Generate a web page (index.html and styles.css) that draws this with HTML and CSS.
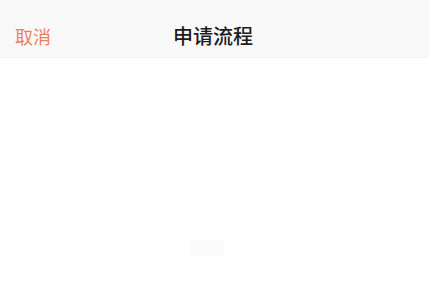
FILE: index.html
```html
<!DOCTYPE html>
<html lang="zh">
<head>
<meta charset="utf-8">
<title>申请流程</title>
<link rel="stylesheet" href="styles.css">
</head>
<body>
<div class="page">
  <header class="navbar">
    <span class="nav-left">取消</span>
    <span class="nav-title">申请流程</span>
    <span class="nav-right"></span>
  </header>
  <main class="content">
    <div class="placeholder"></div>
  </main>
</div>
</body>
</html>
```
FILE: styles.css
```css
html, body {
  margin: 0;
  padding: 0;
  background: #ffffff;
}
.page {
  width: 433px;
  height: 288px;
  display: flex;
  flex-direction: column;
  font-family: "Noto Sans CJK SC", "Noto Sans", sans-serif;
  overflow: hidden;
}
.navbar {
  height: 58px;
  flex: none;
  background: #f8f8f8;
  display: grid;
  grid-template-columns: 1fr auto 1fr;
  align-items: center;
  padding: 14px 15px 0;
  margin-right: 4px;
  box-sizing: border-box;
  border-bottom: 1px solid #f3f3f3;
}
.nav-left {
  font-size: 18px;
  color: #ec7f5e;
  justify-self: start;
}
.nav-title {
  font-size: 20px;
  font-weight: 500;
  color: #1c1c1c;
  margin-left: -3px;
}
.content {
  flex: 1;
  display: flex;
  flex-direction: column;
  align-items: center;
  padding-top: 182px;
}
.placeholder {
  width: 33px;
  height: 16px;
  background: #fbfbfb;
  margin-left: -18px;
}
```
